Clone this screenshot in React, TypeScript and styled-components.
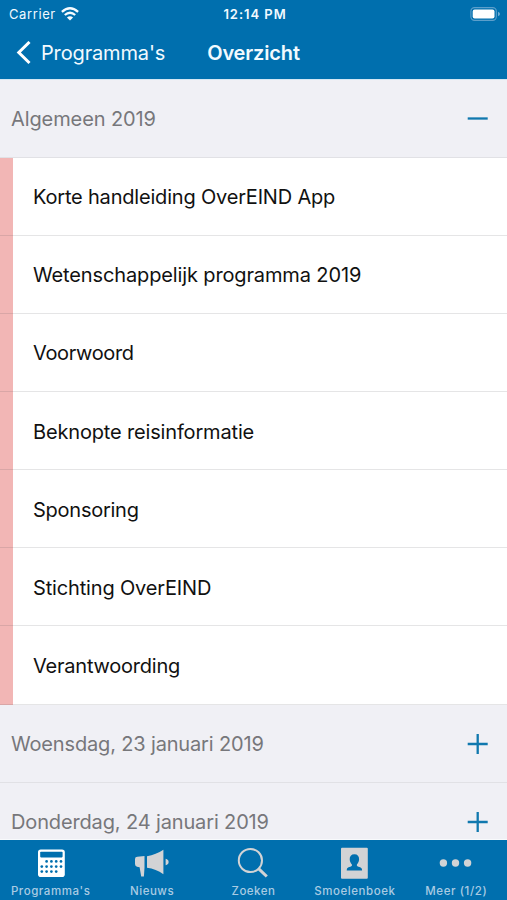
import React from "react";
import styled, { createGlobalStyle } from "styled-components";

const BLUE = "#006fae";

const GlobalStyle = createGlobalStyle`
  * { box-sizing: border-box; }
  html, body { margin: 0; background: #f0f0f5; }
  body { font-family: Inter, "Liberation Sans", sans-serif; overflow: hidden; }
`;

const Screen = styled.div`
  width: 507px;
  height: 900px;
  display: flex;
  flex-direction: column;
  overflow: hidden;
`;

const Header = styled.header`
  flex: none;
  height: 79px;
  background: ${BLUE};
  color: #f2faff;
`;

const StatusBar = styled.div`
  height: 27px;
  display: grid;
  grid-template-columns: 1fr auto 1fr;
  align-items: center;
  padding: 1px 6px 0 9px;
  font-size: 13px;
  line-height: 16px;
`;

const Carrier = styled.div`
  display: flex;
  align-items: center;
  gap: 5px;
  letter-spacing: 0.6px;
`;

const Clock = styled.div`
  font-weight: 600;
  font-size: 13px;
  letter-spacing: 0.95px;
  padding-bottom: 1px;
`;

const Battery = styled.div`
  display: flex;
  justify-content: flex-end;
`;

const NavBar = styled.div`
  height: 52px;
  display: grid;
  grid-template-columns: 1fr auto 1fr;
  align-items: center;
  padding: 0 16px;
  font-size: 20px;
  line-height: 24px;
`;

const Back = styled.div`
  display: flex;
  align-items: center;
  gap: 10px;
  letter-spacing: -0.15px;
`;

const Title = styled.div`
  font-weight: 600;
  letter-spacing: -0.15px;
`;

const Content = styled.main`
  flex: 1;
  min-height: 0;
  overflow: hidden;
  border-top: 1px solid #d3e7f4;
  border-bottom: 1px solid #f8fafc;
`;

const SectionHeader = styled.div`
  height: 78.15px;
  display: flex;
  align-items: center;
  justify-content: space-between;
  padding: 1px 18px 0 11px;
  background: #f0f0f5;
  border-bottom: 1px solid #e1e1e5;
  color: #77777b;
  font-size: 20px;

  &:first-child {
    height: 77.6px;
  }
`;

const Label = styled.span<{ $spacing: number }>`
  letter-spacing: ${(p) => p.$spacing}px;
  white-space: nowrap;
`;

const Row = styled.div`
  height: 78.15px;
  display: flex;
  align-items: center;
  padding: 2px 0 0 33px;
  background: linear-gradient(to right, #f2b6b5 13px, #fff 13px);
  border-bottom: 1px solid rgba(70, 70, 80, 0.14);
  color: #111;
  font-size: 20px;
`;

const TabBar = styled.nav`
  flex: none;
  height: 60px;
  display: grid;
  grid-template-columns: repeat(5, 1fr);
  background: ${BLUE};
`;

const Tab = styled.div<{ $active?: boolean }>`
  display: flex;
  flex-direction: column;
  align-items: center;
  padding-top: 5px;
  color: ${(p) => (p.$active ? "#ffffff" : "#d2d3d5")};
`;

const TabLabel = styled.span<{ $spacing: number }>`
  margin-top: 2px;
  font-size: 11.5px;
  line-height: 16px;
  font-weight: 500;
  letter-spacing: ${(p) => p.$spacing}px;
  color: #a9cbe3;
  white-space: nowrap;
`;

const TabIcon = styled.svg`
  width: 40px;
  height: 36px;
  flex: none;
`;

const Wifi = () => (
  <svg width="18" height="14" viewBox="0 0 18 14" fill="none" stroke="#f5fbff" strokeWidth="2.3">
    <path d="M.9 4.8Q9-2.4 17.1 4.8" />
    <path d="M3.8 8Q9 3.5 14.2 8" />
    <path d="M9 13.4 5.9 10.4Q9 7.9 12.1 10.4Z" fill="#f5fbff" stroke="none" />
  </svg>
);

const BatteryIcon = () => (
  <svg width="31" height="14" viewBox="0 0 31 14">
    <rect x=".9" y=".6" width="25.4" height="12.8" rx="3.6" fill="none" stroke="#5c9fcb" strokeWidth="1.1" />
    <rect x="2.7" y="2.4" width="21.8" height="9.2" rx="2" fill="#fff" />
    <path d="M28 4.8q2 .7 2 2.2t-2 2.2z" fill="#70add4" />
  </svg>
);

const ToggleIcon = ({ open }: { open?: boolean }) => (
  <svg width="22" height="22" viewBox="0 0 22 22" stroke="#1078ae" strokeWidth="2.3">
    <path d={open ? "M.7 10.5H20.7" : "M.7 11H20.7M10.7 1V21"} />
  </svg>
);

const dots: [number, number][] = [];
[15.8, 21, 26].forEach((y, r) =>
  [10.5, 15.3, 20.1, 24.9, 29.7].forEach((x, c) => {
    if (!(r === 0 && c === 0) && !(r === 2 && c === 4)) dots.push([x, y]);
  }),
);

const CalendarIcon = () => (
  <TabIcon viewBox="0 0 40 36">
    <rect x="7" y="4.5" width="26.8" height="27.5" rx="2.8" fill="currentColor" />
    <rect x="9.2" y="6.8" width="22.4" height="5.6" rx=".8" fill={BLUE} />
    {dots.map(([x, y]) => (
      <circle key={`${x}-${y}`} cx={x + 0.3} cy={y + 0.6} r="1.35" fill={BLUE} />
    ))}
  </TabIcon>
);

const NewsIcon = () => (
  <TabIcon viewBox="0 0 40 36" fill="currentColor">
    <path d="M3 14q0-2.2 2.4-2.3l7.1-.7V22.7l-.6 8.9H9.2L7.6 22.3 5 21.7Q3 21.2 3 19Z" />
    <path d="M15 11.2Q24 9.8 31.4 4.8V29.2Q24 24 15 22.8Z" />
    <path d="M33.6 13.7q3 .7 3 3.3t-3 3.3Z" />
  </TabIcon>
);

const SearchIcon = () => (
  <TabIcon viewBox="0 0 40 36" fill="none" stroke="currentColor">
    <circle cx="17.4" cy="15.5" r="11.6" strokeWidth="2" />
    <path d="M25.8 23.8 33.8 31.5" strokeWidth="3" />
  </TabIcon>
);

const PersonIcon = () => (
  <TabIcon viewBox="0 0 40 36">
    <rect x="6" y="2.7" width="26.8" height="31" rx="1" fill="currentColor" />
    <path
      d="M19.4 9.2c3.2 0 4.8 2 4.7 5-.1 2.4-1.1 4-2.2 5.3v1.3c.5 1 4.4 1.2 5 3.3l.2 1.5H11.7l.2-1.5c.6-2.1 4.5-2.3 5-3.3v-1.3c-1.1-1.3-2.1-2.9-2.2-5.3-.1-3 1.5-5 4.7-5Z"
      fill={BLUE}
    />
  </TabIcon>
);

const MoreIcon = () => (
  <TabIcon viewBox="0 0 40 36" fill="currentColor">
    <circle cx="7.4" cy="18" r="3.7" />
    <circle cx="19.5" cy="18" r="3.7" />
    <circle cx="31.6" cy="18" r="3.7" />
  </TabIcon>
);

const rows = [
  { text: "Korte handleiding OverEIND App", spacing: -0.19 },
  { text: "Wetenschappelijk programma 2019", spacing: -0.13 },
  { text: "Voorwoord", spacing: -0.35 },
  { text: "Beknopte reisinformatie", spacing: -0.16 },
  { text: "Sponsoring", spacing: -0.25 },
  { text: "Stichting OverEIND", spacing: -0.16 },
  { text: "Verantwoording", spacing: -0.22 },
];

const tabs = [
  { text: "Programma's", spacing: 0.58, Icon: CalendarIcon },
  { text: "Nieuws", spacing: 0.5, Icon: NewsIcon },
  { text: "Zoeken", spacing: 0.5, Icon: SearchIcon },
  { text: "Smoelenboek", spacing: 0.55, Icon: PersonIcon },
  { text: "Meer (1/2)", spacing: 0.6, Icon: MoreIcon },
];

export default function App() {
  return (
    <Screen>
      <GlobalStyle />
      <Header>
        <StatusBar>
          <Carrier>
            Carrier
            <Wifi />
          </Carrier>
          <Clock>12:14 PM</Clock>
          <Battery>
            <BatteryIcon />
          </Battery>
        </StatusBar>
        <NavBar>
          <Back>
            <svg width="15" height="24" viewBox="0 0 15 24" fill="none" stroke="#fff" strokeWidth="3">
              <path d="M13.5 1 2.8 11.5 13.5 22" />
            </svg>
            Programma's
          </Back>
          <Title>Overzicht</Title>
        </NavBar>
      </Header>
      <Content>
        <SectionHeader>
          <Label $spacing={-0.1}>Algemeen 2019</Label>
          <ToggleIcon open />
        </SectionHeader>
        {rows.map((r) => (
          <Row key={r.text}>
            <Label $spacing={r.spacing}>{r.text}</Label>
          </Row>
        ))}
        <SectionHeader>
          <Label $spacing={-0.16}>Woensdag, 23 januari 2019</Label>
          <ToggleIcon />
        </SectionHeader>
        <SectionHeader>
          <Label $spacing={-0.14}>Donderdag, 24 januari 2019</Label>
          <ToggleIcon />
        </SectionHeader>
      </Content>
      <TabBar>
        {tabs.map(({ text, spacing, Icon }, i) => (
          <Tab key={text} $active={i === 0}>
            <Icon />
            <TabLabel $spacing={spacing}>{text}</TabLabel>
          </Tab>
        ))}
      </TabBar>
    </Screen>
  );
}
